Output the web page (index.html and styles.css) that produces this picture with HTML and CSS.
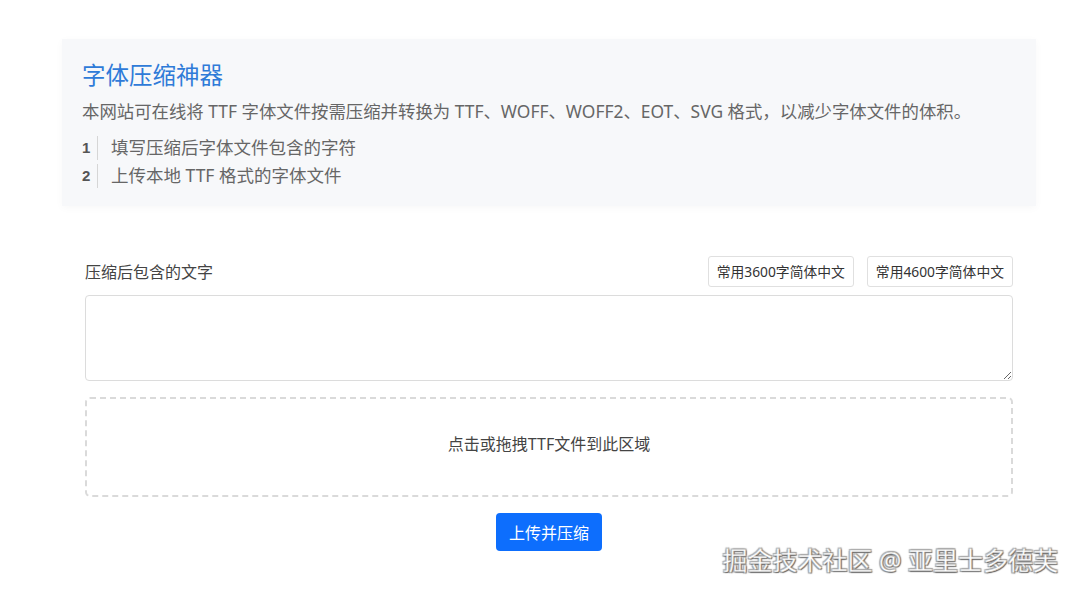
FILE: index.html
```html
<!DOCTYPE html>
<html lang="zh-CN">
<head>
  <meta charset="UTF-8">
  <meta name="viewport" content="width=device-width, initial-scale=1.0">
  <title>字体压缩神器</title>
  <link rel="stylesheet" href="styles.css">
</head>
<body>
  <div class="page">
    <div class="intro">
      <h1 class="title">字体压缩神器</h1>
      <p class="desc">本网站可在线将 TTF 字体文件按需压缩并转换为 TTF、WOFF、WOFF2、EOT、SVG 格式，以减少字体文件的体积。</p>
      <ol class="steps">
        <li><span class="num">1</span><span class="step-text">填写压缩后字体文件包含的字符</span></li>
        <li><span class="num">2</span><span class="step-text">上传本地 TTF 格式的字体文件</span></li>
      </ol>
    </div>

    <form class="form">
      <div class="label-row">
        <label class="label" for="chars">压缩后包含的文字</label>
        <div class="presets">
          <button type="button" class="preset">常用3600字简体中文</button>
          <button type="button" class="preset">常用4600字简体中文</button>
        </div>
      </div>
      <textarea id="chars" class="chars"></textarea>
      <div class="dropzone">点击或拖拽TTF文件到此区域</div>
      <div class="actions">
        <button type="button" class="btn">上传并压缩</button>
      </div>
    </form>
  </div>

  <div class="watermark">掘金技术社区 @ 亚里士多德芙</div>
</body>
</html>
```

FILE: styles.css
```css
body {
  margin: 0;
  font-family: "Noto Sans", "Noto Sans CJK SC", sans-serif;
  background: #ffffff;
  color: #333;
}

.page {
  width: 974px;
  margin-left: 62px;
  padding-top: 39px;
}

.intro {
  background: #f7f8fa;
  padding: 19px 20px 16px;
  box-shadow: 0 2px 8px rgba(0, 0, 0, 0.03);
}

.title {
  margin: 0;
  font-size: 23.5px;
  font-weight: normal;
  line-height: 34px;
  color: #2f7bd8;
}

.desc {
  margin: 6px 0 0;
  font-size: 17.4px;
  line-height: 26px;
  color: #666;
}

.steps {
  list-style: none;
  margin: 10px 0 0;
  padding: 0;
}

.steps li {
  display: flex;
  align-items: center;
  height: 28px;
}

.num {
  width: 14px;
  padding-right: 1px;
  border-right: 1px solid #d6d6d6;
  font-family: "Liberation Sans", Arial, sans-serif;
  font-weight: bold;
  font-size: 15px;
  line-height: 24px;
  color: #555;
}

.step-text {
  margin-left: 13px;
  font-size: 17.5px;
  line-height: 26px;
  padding-bottom: 2px;
  color: #666;
}

.form {
  margin: 50px 23px 0;
}

.label-row {
  display: flex;
  justify-content: space-between;
  align-items: center;
}

.label {
  font-size: 16px;
  color: #444;
  padding-bottom: 2px;
}

.presets {
  display: flex;
  gap: 13px;
}

.preset {
  height: 31px;
  padding: 0 8px 2px;
  font-family: inherit;
  font-size: 13.8px;
  color: #333;
  background: #fff;
  border: 1px solid #e0e0e0;
  border-radius: 3px;
}

.chars {
  display: block;
  box-sizing: border-box;
  width: 100%;
  height: 86px;
  margin-top: 8px;
  border: 1px solid #dcdcdc;
  border-radius: 4px;
  font-family: inherit;
}

.dropzone {
  box-sizing: border-box;
  height: 100px;
  margin-top: 16px;
  padding-bottom: 8px;
  border: 2px dashed #dadada;
  border-radius: 5px;
  display: flex;
  justify-content: center;
  align-items: center;
  font-size: 16px;
  color: #444;
}

.actions {
  display: flex;
  justify-content: center;
  margin-top: 16px;
}

.btn {
  width: 106px;
  height: 38px;
  padding-bottom: 2px;
  border: none;
  border-radius: 4px;
  background: #0d6efd;
  color: #fff;
  font-family: inherit;
  font-size: 16px;
}

.watermark {
  position: absolute;
  right: 19px;
  top: 541px;
  font-size: 25px;
  color: #ffffff;
  -webkit-text-stroke: 0.4px #bbb;
  text-shadow: 1px 1px 1px #666, -1px -1px 1px #aaa, 1px -1px 1px #999, -1px 1px 1px #999;
}
```
